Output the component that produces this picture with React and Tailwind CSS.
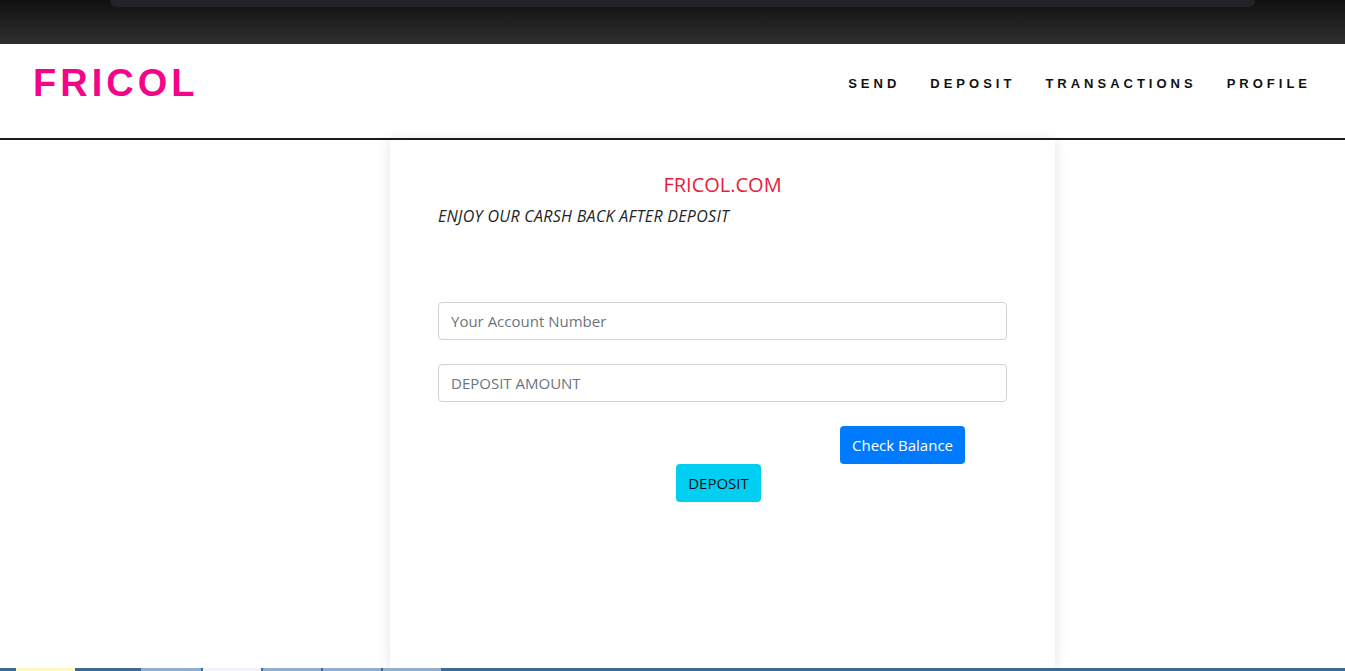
import React from "react";

const navItems = ["SEND", "DEPOSIT", "TRANSACTIONS", "PROFILE"];

const App = () => {
  return (
    <div className="h-[671px] w-full overflow-hidden flex flex-col bg-white">
      {/* Browser strip */}
      <div className="h-[44px] shrink-0 bg-gradient-to-b from-[#111111] to-[#2f2f2f] relative">
        <div className="absolute left-[110px] right-[90px] top-0 h-[7px] rounded-b-[8px] bg-[#222327]"></div>
      </div>

      {/* Header */}
      <header className="h-[96px] shrink-0 flex items-center justify-between border-b-2 border-[#1b1b1b] pl-[33px] pr-[34px] pb-[16px]" style={{ fontFamily: '"Liberation Sans", Arial, sans-serif' }}>
        <h1 className="text-[38px] font-bold tracking-[4px] text-[#f5048a] leading-none">FRICOL</h1>
        <nav className="flex items-center gap-[30px]">
          {navItems.map((item) => (
            <a key={item} className="text-[13px] font-bold tracking-[4px] text-[#111111] leading-none">
              {item}
            </a>
          ))}
        </nav>
      </header>

      {/* Content */}
      <main className="flex-1 flex justify-center pl-[100px]" style={{ fontFamily: '"Open Sans", "Noto Sans", sans-serif' }}>
        <div className="w-[665px] h-full bg-white shadow-[0_0_12px_rgba(0,0,0,0.12)] px-[48px] pt-[32px]">
          <h2 className="text-center text-[20px] text-[#ea1c3c] leading-[26px]">FRICOL.COM</h2>
          <p className="mt-[7px] italic text-[16px] tracking-[0.3px] text-[#212529] leading-[22px]">ENJOY OUR CARSH BACK AFTER DEPOSIT</p>

          <input
            className="mt-[75px] w-full h-[38px] border border-[#ced4da] rounded-[4px] px-[12px] text-[15px] text-[#495057] placeholder-[#6c757d] outline-none"
            placeholder="Your Account Number"
          />
          <input
            className="mt-[24px] w-full h-[38px] border border-[#ced4da] rounded-[4px] px-[12px] text-[15px] text-[#495057] placeholder-[#6c757d] outline-none"
            placeholder="DEPOSIT AMOUNT"
          />

          {/* Buttons */}
          <div className="mt-[24px] flex justify-end pr-[42px]">
            <button className="h-[38px] px-[12px] rounded-[4px] bg-[#007bff] text-white text-[15px]">Check Balance</button>
          </div>
          <div className="flex justify-center pr-[8px]">
            <button className="h-[38px] px-[12px] rounded-[4px] bg-[#00cff2] text-[#111111] text-[15px]">DEPOSIT</button>
          </div>
        </div>
      </main>

      {/* Taskbar strip */}
      <div className="h-[3px] shrink-0 bg-[#3a6a9a] flex gap-[2px] pl-[16px]">
        <div className="w-[59px] bg-[#fff8c0]"></div>
        <div className="w-[60px] ml-[64px] bg-[#8fb0d0]"></div>
        <div className="w-[58px] bg-[#f0f4f8]"></div>
        <div className="w-[58px] bg-[#8fb0d0]"></div>
        <div className="w-[58px] bg-[#8fb0d0]"></div>
        <div className="w-[58px] bg-[#8fb0d0]"></div>
      </div>
    </div>
  );
};

export default App;
